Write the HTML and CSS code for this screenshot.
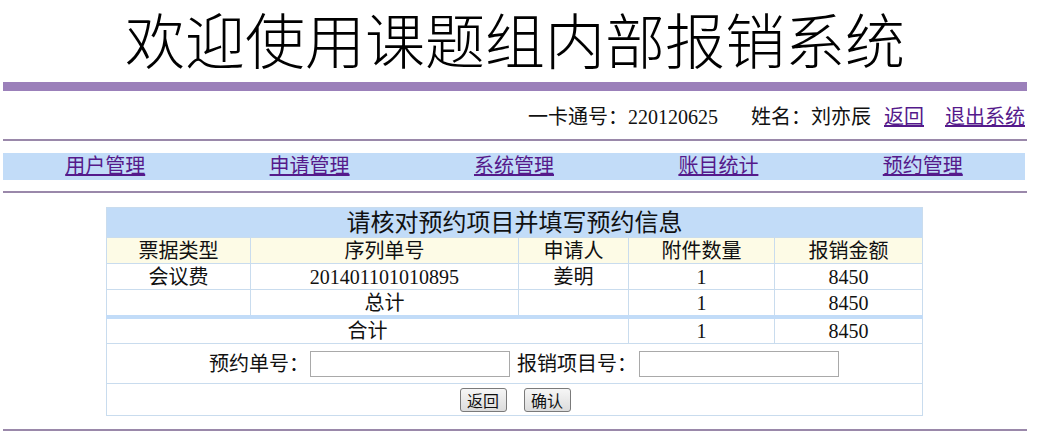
FILE: index.html
```html
<!DOCTYPE html>
<html lang="zh-CN">
<head>
<meta charset="utf-8">
<title>欢迎使用课题组内部报销系统</title>
<link rel="stylesheet" href="styles.css">
</head>
<body>
<div class="page">
  <h1 class="site-title">欢迎使用课题组内部报销系统</h1>
  <div class="title-bar"></div>
  <div class="user-info">
    <span class="card">一卡通号：220120625</span>
    <span class="name">姓名：刘亦辰</span>
    <a class="link back" href="#">返回</a>
    <a class="link logout" href="#">退出系统</a>
  </div>
  <div class="rule"></div>
  <nav class="nav">
    <a class="link nav-item" href="#">用户管理</a>
    <a class="link nav-item" href="#">申请管理</a>
    <a class="link nav-item" href="#">系统管理</a>
    <a class="link nav-item" href="#">账目统计</a>
    <a class="link nav-item" href="#">预约管理</a>
  </nav>
  <div class="rule rule-2"></div>
  <table class="data">
    <colgroup>
      <col class="c1"><col class="c2"><col class="c3"><col class="c4"><col class="c5">
    </colgroup>
    <tr class="caption-row"><td colspan="5">请核对预约项目并填写预约信息</td></tr>
    <tr class="head-row"><td>票据类型</td><td>序列单号</td><td>申请人</td><td>附件数量</td><td>报销金额</td></tr>
    <tr class="row"><td>会议费</td><td>201401101010895</td><td>姜明</td><td>1</td><td>8450</td></tr>
    <tr class="row"><td></td><td>总计</td><td></td><td>1</td><td>8450</td></tr>
    <tr class="row sum-row"><td colspan="3">合计</td><td>1</td><td>8450</td></tr>
    <tr class="form-row"><td colspan="5">
      <div class="fields">
        <label class="lbl">预约单号：</label><input class="field" type="text">
        <label class="lbl lbl-2">报销项目号：</label><input class="field" type="text">
      </div>
    </td></tr>
    <tr class="btn-row"><td colspan="5">
      <div class="buttons">
        <button class="btn" type="button">返回</button>
        <button class="btn" type="button">确认</button>
      </div>
    </td></tr>
  </table>
  <div class="rule rule-3"></div>
</div>
</body>
</html>
```

FILE: styles.css
```css
body {
  margin: 0;
  background: #ffffff;
  font-family: "Liberation Serif", "Noto Sans CJK SC", serif;
  color: #111111;
}

.page {
  width: 1024px;
  margin-left: 3px;
}

.site-title {
  margin: 0;
  height: 82px;
  line-height: 76px;
  font-size: 60px;
  font-weight: 300;
  text-align: center;
  font-family: "Noto Sans CJK SC", sans-serif;
  color: #000000;
}

.title-bar {
  height: 9px;
  background: #9b80ba;
}

.user-info {
  height: 48px;
  display: flex;
  justify-content: flex-end;
  align-items: center;
  font-size: 20px;
  padding-right: 2px;
}

.user-info .name {
  margin-left: 33px;
}

.user-info .back {
  margin-left: 13px;
}

.user-info .logout {
  margin-left: 21px;
}

.link {
  color: #551a8b;
  text-decoration: underline;
}

.rule {
  height: 2px;
  background: #9a88aa;
}

.nav {
  margin-top: 12px;
  width: 1022px;
  height: 27px;
  background: #c2dcf8;
  display: grid;
  grid-template-columns: repeat(5, 1fr);
  align-items: center;
  font-size: 20px;
}

.nav-item {
  justify-self: center;
  line-height: 27px;
}

.rule-2 {
  margin-top: 11px;
}

.data {
  margin: 14px 0 0 103px;
  width: 816px;
  border-collapse: collapse;
  font-size: 20px;
  table-layout: fixed;
}

.c1 { width: 144px; }
.c2 { width: 268px; }
.c3 { width: 110px; }
.c4 { width: 146px; }
.c5 { width: 148px; }

.data td {
  border: 1px solid #c9dcee;
  text-align: center;
  padding: 0;
  line-height: 24px;
}

.caption-row td {
  background: #c2dcf8;
  font-size: 24px;
  height: 29px;
}

.head-row td {
  background: #fdfbe6;
  height: 25px;
}

.row td {
  height: 25px;
}

.sum-row td {
  border-top: 4px solid #c2dcf8;
  height: 24px;
}

.form-row td {
  height: 39px;
}

.fields {
  display: flex;
  align-items: center;
  padding-left: 102px;
}

.lbl {
  font-size: 20px;
}

.field {
  width: 200px;
  height: 26px;
  box-sizing: border-box;
  border: 1px solid #a9a9a9;
  margin: 0 0 0 1px;
  padding: 0;
  background: #ffffff;
}

.lbl-2 {
  margin-left: 7px;
  margin-right: 1px;
}

.btn-row td {
  height: 31px;
}

.buttons {
  display: flex;
  justify-content: center;
  gap: 17px;
  padding-left: 1px;
}

.btn {
  width: 47px;
  height: 24px;
  padding: 0;
  font-size: 16px;
  line-height: 20px;
  font-family: "Noto Sans CJK SC", sans-serif;
  color: #111111;
  border: 1px solid #7a7a7a;
  border-radius: 3px;
  background: linear-gradient(#f6f6f6, #dcdcdc);
}

.rule-3 {
  margin-top: 13px;
}
```
